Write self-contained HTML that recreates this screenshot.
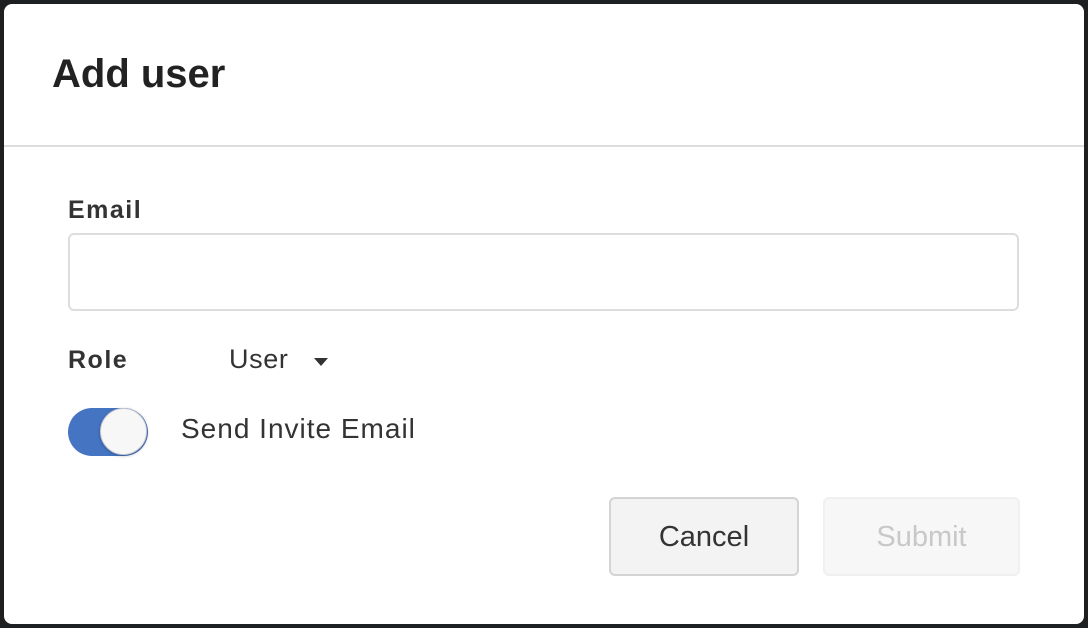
<!DOCTYPE html>
<html><head><style>
html,body{margin:0;padding:0;width:1088px;height:628px;background:#1e1f21;overflow:hidden;font-family:"Liberation Sans",sans-serif;}
.d{position:absolute;left:4px;top:4px;width:1080px;height:620px;background:#fff;border-radius:8px;}
.t{position:absolute;left:48px;top:48px;font-size:40px;font-weight:bold;color:#222;letter-spacing:0px;}
.hr{position:absolute;left:0;right:0;top:141px;height:2px;background:#ddd;}
.lab{position:absolute;font-size:25px;font-weight:bold;color:#333;letter-spacing:1.5px;}
.inp{position:absolute;left:64px;top:229px;border:2px solid #ddd;border-radius:6px;box-sizing:border-box;width:951px;height:78px;}
.txt{position:absolute;font-size:27px;color:#333;}
.tog{position:absolute;left:64px;top:404px;width:80px;height:48px;border-radius:24px;background:#4474c2;}
.knob{position:absolute;left:96px;top:404px;width:47px;height:47px;border-radius:50%;background:#f7f7f7;border:1px solid #c8c8d0;box-sizing:border-box;box-shadow:0 1px 3px rgba(0,0,0,.25);}
.btn{position:absolute;top:493px;height:79px;border-radius:6px;box-sizing:border-box;font-size:29px;text-align:center;line-height:77px;}
</style></head><body>
<div class="d">
<div class="t">Add user</div>
<div class="hr"></div>
<div class="lab" style="left:64px;top:192px;">Email</div>
<div class="inp"></div>
<div class="lab" style="left:64px;top:342px;">Role</div>
<div class="txt" style="left:225px;top:340px;letter-spacing:0.6px;">User</div>
<svg style="position:absolute;left:310px;top:354px" width="14" height="8"><path d="M0 0H14L7 8Z" fill="#333"/></svg>
<div class="tog"></div><div class="knob"></div>
<div class="txt" style="left:177px;top:409px;font-size:28px;letter-spacing:1px;">Send Invite Email</div>
<div class="btn" style="left:605px;width:190px;background:#f3f3f3;border:2px solid #d4d4d4;color:#333;">Cancel</div>
<div class="btn" style="left:819px;width:197px;background:#f7f7f7;border:2px solid #f0f0f0;color:#c8c8c8;">Submit</div>
</div>
</body></html>
